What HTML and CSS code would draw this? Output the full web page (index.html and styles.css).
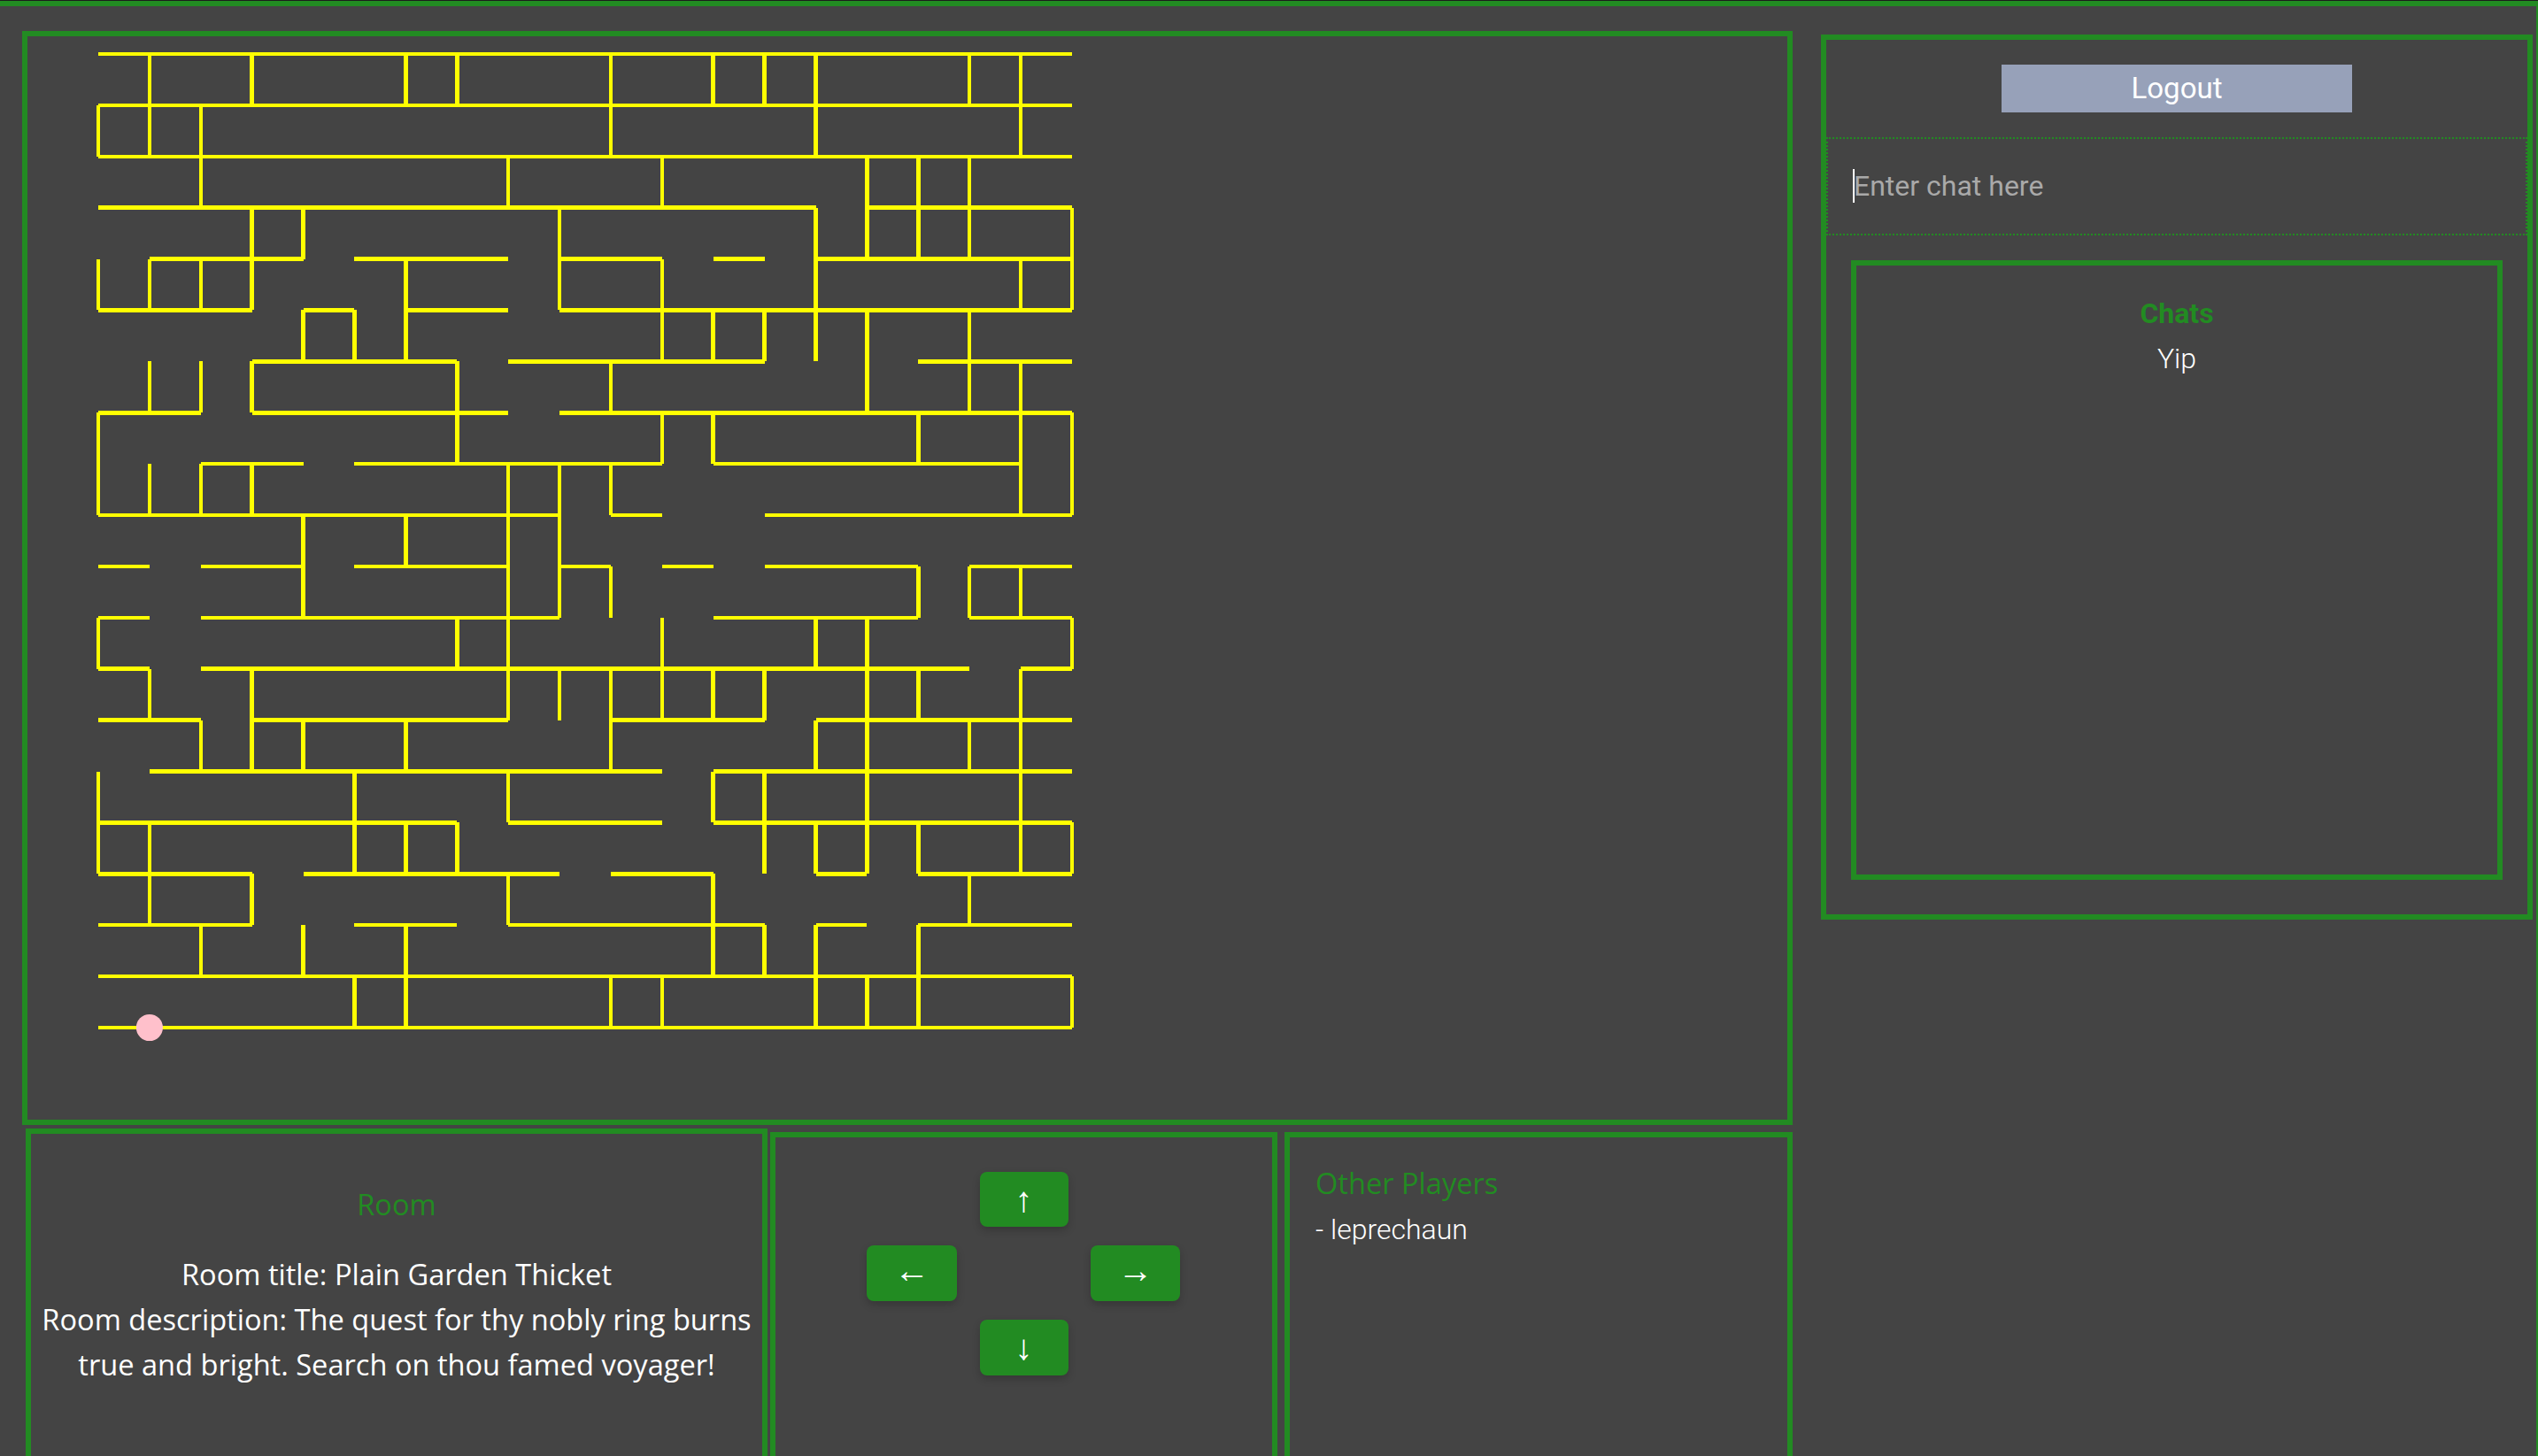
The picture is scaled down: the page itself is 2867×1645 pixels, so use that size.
FILE: index.html
```html
<!DOCTYPE html>
<html lang="en">
<head>
<meta charset="utf-8">
<title>Maze Game</title>
<link rel="stylesheet" href="styles.css">
</head>
<body>
<div class="page">
  <div class="left">
    <section class="box game">
      <svg class="maze" width="1100" height="1100" viewBox="0 0 19 19" aria-label="Maze map">
        <path class="walls" d="M0 0H19M0 1H19M0 2H19M0 3H14M15 3H19M1 4H4M5 4H8M9 4H11M12 4H13M14 4H19M0 5H3M4 5H5M6 5H8M9 5H19M3 6H7M8 6H13M16 6H19M0 7H2M3 7H8M9 7H19M2 8H4M5 8H11M12 8H18M0 9H9M10 9H11M13 9H19M0 10H1M2 10H4M5 10H8M9 10H10M11 10H12M13 10H16M17 10H19M0 11H1M2 11H9M12 11H16M17 11H19M0 12H1M2 12H17M18 12H19M0 13H2M3 13H8M10 13H13M14 13H19M1 14H11M12 14H19M0 15H7M8 15H11M12 15H19M0 16H3M4 16H9M10 16H12M14 16H15M16 16H19M0 17H3M5 17H7M8 17H13M14 17H15M16 17H19M0 18H19M0 19H19
        M0 1V2M0 4V5M0 7V9M0 11V12M0 14V16
        M1 0V2M1 4V5M1 6V7M1 8V9M1 12V13M1 15V17
        M2 1V3M2 4V5M2 6V7M2 8V9M2 13V14M2 17V18
        M3 0V1M3 3V5M3 6V7M3 8V9M3 12V14M3 16V17
        M4 3V4M4 5V6M4 9V11M4 13V14M4 17V18
        M5 5V6M5 14V16M5 18V19
        M6 0V1M6 4V6M6 9V10M6 13V14M6 15V16M6 17V19
        M7 0V1M7 6V8M7 11V12M7 15V16
        M8 2V3M8 8V13M8 14V15M8 16V17
        M9 3V5M9 8V11M9 12V13
        M10 0V2M10 6V7M10 8V9M10 10V11M10 12V14M10 18V19
        M11 2V3M11 4V6M11 7V8M11 11V13M11 18V19
        M12 0V1M12 5V6M12 7V8M12 12V13M12 14V15M12 16V18
        M13 0V1M13 5V6M13 12V13M13 14V16M13 17V18
        M14 0V2M14 3V6M14 11V12M14 13V14M14 15V16M14 17V19
        M15 2V4M15 5V7M15 11V16M15 18V19
        M16 2V4M16 7V8M16 10V11M16 12V13M16 15V16M16 17V19
        M17 0V1M17 2V4M17 5V7M17 10V11M17 13V14M17 16V17
        M18 0V2M18 4V5M18 6V9M18 10V11M18 12V16
        M19 3V5M19 7V9M19 11V12M19 15V16M19 18V19"/>
        <circle class="player" cx="1" cy="19" r="0.26"/>
      </svg>
    </section>
    <div class="bottom">
      <section class="box room">
        <h3 class="room-title">Room</h3>
        <p class="room-text">Room title: Plain Garden Thicket</p>
        <p class="room-text">Room description: The quest for thy nobly ring burns true and bright. Search on thou famed voyager!</p>
      </section>
      <section class="box controls">
        <div class="pad">
          <button class="arrow up" type="button">↑</button>
          <button class="arrow west" type="button">←</button>
          <button class="arrow east" type="button">→</button>
          <button class="arrow down" type="button">↓</button>
        </div>
      </section>
      <section class="box players">
        <h3 class="players-title">Other Players</h3>
        <p class="players-item">- leprechaun</p>
      </section>
    </div>
  </div>
  <aside class="box side">
    <div class="logout-row"><button class="logout" type="button">Logout</button></div>
    <div class="chat-entry">
      <input class="chat-input" type="text" placeholder="Enter chat here">
      <span class="caret"></span>
    </div>
    <section class="box chats">
      <h3 class="chats-title">Chats</h3>
      <p class="chats-item">Yip</p>
    </section>
  </aside>
</div>
</body>
</html>
```

FILE: styles.css
```css
* { box-sizing: border-box; }

html { background: #444; overflow: hidden; }

body {
  margin: 0;
  height: 1645px;
  overflow: hidden;
  border-top: 1px solid #1c1c1c;
  font-family: "Roboto", sans-serif;
  font-size: 32px;
  color: #fff;
}

h3, p { margin: 0; font-size: inherit; font-weight: 400; }

.page {
  display: flex;
  align-items: flex-start;
  height: 1644px;
  overflow: hidden;
  padding-left: 25px;
  border-top: 6px solid #228b22;
  border-right: 2px solid #228b22;
}

.box { border: 6px solid #228b22; }

.left { width: 2000px; flex: none; margin-top: 28px; }

.game {
  height: 1236px;
  padding: 20px 0 0 80px;
}

.maze { display: block; overflow: visible; }

.walls {
  fill: none;
  stroke: #ffff00;
  stroke-width: 0.0778;
  shape-rendering: crispEdges;
}

.player { fill: #ffc0cb; }

.bottom {
  display: flex;
  align-items: flex-start;
  margin-top: 4px;
}

.room, .controls, .players { height: 420px; }

.room {
  width: 838px;
  margin-left: 4px;
  padding: 54px 10px 0;
  text-align: center;
  font-family: "Open Sans", sans-serif;
  font-size: 32.6px;
  line-height: 51px;
}

.room-title {
  color: #228b22;
  margin-bottom: 28px;
}

.controls {
  width: 573px;
  margin: 4px 0 0 3px;
  padding: 39px 0 0 103px;
}

.pad {
  display: grid;
  grid-template-columns: 102px 100px 101px;
  grid-template-rows: 62px 63px 63px;
  column-gap: 25.5px;
  row-gap: 21px;
}

.arrow {
  border: 0;
  padding: 0;
  border-radius: 8px;
  background: #228b22;
  color: #fff;
  font-family: "Liberation Sans", sans-serif;
  font-size: 40px;
  box-shadow: 0 4px 10px rgba(0, 0, 0, 0.2);
}

.up { grid-area: 1 / 2; }
.west { grid-area: 2 / 1; padding-bottom: 7px; }
.east { grid-area: 2 / 3; padding-bottom: 7px; }
.down { grid-area: 3 / 2; }

.players {
  width: 574px;
  margin: 4px 0 0 8px;
  padding: 26px 29px 0;
  font-family: "Open Sans", sans-serif;
  font-size: 32.6px;
  line-height: 52px;
}

.players-title { color: #228b22; }

.players-item { font-family: "Roboto", sans-serif; font-size: 32px; font-weight: 300; }

.side {
  width: 804px;
  height: 1000px;
  flex: none;
  margin: 32px 0 0 32px;
}

.logout-row {
  display: flex;
  justify-content: center;
  padding: 28px 0;
}

.logout {
  width: 396px;
  height: 54px;
  border: 0;
  padding: 0 0 2px;
  background: #97a1b9;
  color: #fff;
  font-family: "Roboto", sans-serif;
  font-size: 33px;
}

.chat-entry { position: relative; }

.chat-input {
  display: block;
  width: 100%;
  height: 111px;
  padding: 0 0 2px 29px;
  border: 2px dotted #228b22;
  background: transparent;
  color: #fff;
  font-family: "Roboto", sans-serif;
  font-size: 32px;
  outline: none;
}

.chat-input::placeholder { color: #a9a9a9; opacity: 1; }

.caret {
  position: absolute;
  left: 30px;
  top: 36px;
  width: 2px;
  height: 38px;
  background: #fff;
}

.chats {
  width: 736px;
  height: 700px;
  margin: 28px 0 0 28px;
  padding-top: 29px;
  text-align: center;
  line-height: 51px;
}

.chats-title { color: #228b22; font-weight: 700; }

.chats-item { font-weight: 300; }
```
